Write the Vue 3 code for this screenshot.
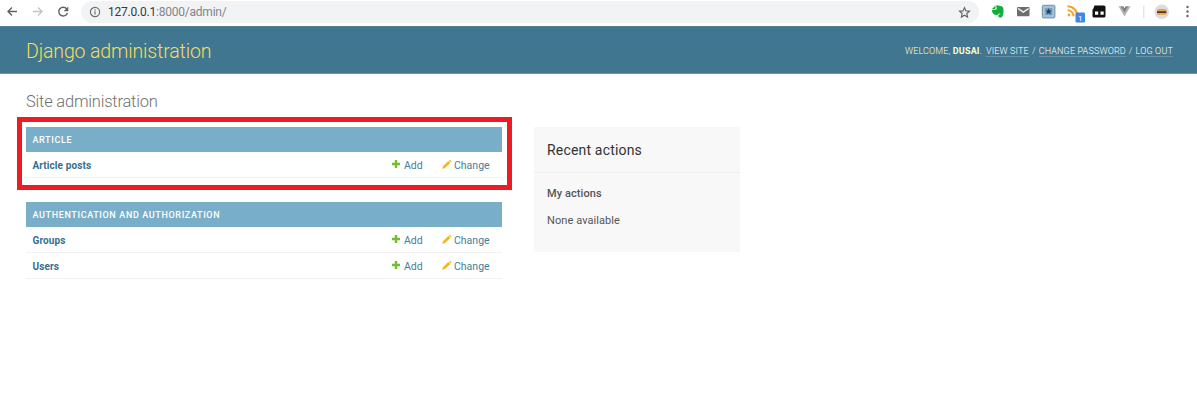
<script setup>
const modules = [
  { name: 'Article', models: ['Article posts'], marked: true },
  { name: 'Authentication and Authorization', models: ['Groups', 'Users'], marked: false },
]
</script>

<template>
  <div class="page">
    <div class="toolbar">
      <svg class="nav" width="76" height="24" viewBox="0 0 76 24" fill="none" stroke-width="1.4">
        <path d="M17 11.5H8M12 7.5l-4 4 4 4" stroke="#5f6368" />
        <path d="M33 11.5h9M38 7.5l4 4-4 4" stroke="#c2c4c6" />
        <path d="M66.600 8.800A4.400 4.400 0 1 0 67.400 13" stroke="#5f6368" />
        <path d="M68.300 6.600v4.600h-4.600z" fill="#5f6368" />
      </svg>
      <div class="omnibox">
        <svg class="info" width="12" height="12" viewBox="0 0 12 12" fill="none" stroke="#6b6f73" stroke-width="1.200">
          <circle cx="6" cy="6" r="4.600" />
          <path d="M6 5.300v3.200M6 3.200v1.200" />
        </svg>
        <span class="url"><span class="host">127.0.0.1</span>:8000/admin/</span>
        <svg class="star" width="13" height="13" viewBox="0 0 24 24" fill="none" stroke="#5f6368" stroke-width="2.100">
          <path d="M12 3l2.700 6 6.500.6-4.900 4.300 1.400 6.400-5.700-3.400-5.700 3.400 1.400-6.400-4.900-4.300 6.500-.6z" />
        </svg>
      </div>
      <svg class="extensions" width="219" height="24" viewBox="978 0 219 24">
        <path d="M992 9l3.500-3.500v2.700q0 .8-.8.8zM996.200 5.600q2-.8 3.600.3l2 .4q1.700.5 1.700 3.700 0 5-1.500 6.900-.8 1-2.500.6-1.500-.5-1.200-2 .4-1.400 2-1.100v-.7q-1.800-.4-2.200.6-.7 1.300-3 .5-3-.8-3.200-5h3.500q1.200 0 1.200-1.200z" fill="#13ae39" />
        <rect x="1017" y="7" width="12.500" height="9.300" rx="1" fill="#6d6d6d" />
        <path d="M1018 8.500l5.300 3.600 5.300-3.600" fill="none" stroke="#f6f6f6" stroke-width="1.400" />
        <rect x="1042.300" y="5.300" width="12.600" height="12.600" rx="1.200" fill="#a3c1d8" stroke="#6f8fa6" />
        <path d="M1045.200 8h7v7h-7z" fill="#6f9dbd" />
        <path d="M1048.700 8.300l.9 2.200 2.300.1-1.800 1.400.7 2.300-2.100-1.300-2.100 1.300.7-2.300-1.800-1.400 2.300-.1z" fill="#193f5e" />
        <g fill="none" stroke="#f5a42c" stroke-width="2.100">
          <path d="M1067.500 6.300a10 10 0 0 1 10 10M1067.500 10.200a6 6 0 0 1 6 6" />
          <circle cx="1069" cy="15" r=".7" fill="#f5a42c" stroke-width="1.400" />
        </g>
        <rect x="1075.500" y="12.500" width="9.500" height="10" rx="1" fill="#4285e8" />
        <text x="1080.200" y="20.500" text-anchor="middle" fill="#fff" font-size="8">1</text>
        <path d="M1094.500 5.500h9.500q1.500 0 1.500 1.500v9q0 1.500-1.500 1.500h-10q-1.500 0-1.500-1.500v-6q0-1 .8-1.300z" fill="#111" />
        <path d="M1095 11.500h3.200v3.300h-3.200zM1100.500 11.500h3.200v3.300h-3.200z" fill="#fff" />
        <path d="M1118.500 6.200h3.600l2.400 4 2.400-4h3.600l-6 10.400z" fill="#b2b2b2" />
        <path d="M1121 6.200h2.300l1.200 2 1.200-2h2.300l-3.500 6z" fill="#7d7d7d" />
        <path d="M1143.800 5.500v13" stroke="#dadada" />
        <circle cx="1161.800" cy="11.800" r="7.200" fill="#dedbdc" />
        <rect x="1157" y="9" width="9.500" height="3" rx="1.500" fill="#dda647" />
        <rect x="1157" y="11.300" width="9.500" height="1.900" fill="#50331c" />
        <path d="M1157 13.200h9.500v.8q0 1-1 1h-7.500q-1 0-1-1z" fill="#dfae68" />
        <g fill="#5f6368"><circle cx="1187.500" cy="7" r="1.200" /><circle cx="1187.500" cy="11.500" r="1.200" /><circle cx="1187.500" cy="16" r="1.200" /></g>
      </svg>
    </div>

    <header class="header">
      <div class="branding">Django administration</div>
      <div class="tools">
        <span class="welcome">Welcome, <strong>dusai</strong>.</span>
        <a>View site</a><i>/</i><a>Change password</a><i>/</i><a>Log out</a>
      </div>
    </header>

    <main class="content">
      <h1>Site administration</h1>
      <div class="columns">
        <div class="apps">
          <section v-for="m in modules" :key="m.name" class="module" :class="{ marked: m.marked }">
            <h2>{{ m.name }}</h2>
            <div v-for="model in m.models" :key="model" class="row">
              <b>{{ model }}</b>
              <svg class="icon" width="8" height="8" viewBox="0 0 8 8"><path d="M2.800 0h2.400v2.800h2.800v2.400h-2.800v2.800h-2.400v-2.800h-2.800v-2.400h2.800z" fill="#70bf2b" /></svg>
              <a>Add</a>
              <svg class="icon" width="10" height="9" viewBox="0 0 10 9"><path d="M.2 9l.8-2.800L6.300 1l2 1.900-5.300 5.200zM6.900.5q1-.9 2 0t0 1.900z" fill="#f3b61f" /></svg>
              <a>Change</a>
            </div>
          </section>
        </div>
        <aside class="recent">
          <h2>Recent actions</h2>
          <h3>My actions</h3>
          <p>None available</p>
        </aside>
      </div>
    </main>
  </div>
</template>

<style>
body { margin: 0; background: #fff; }
</style>

<style scoped>
* { box-sizing: border-box; }
.page { width: 1197px; height: 400px; overflow: hidden; background: #fff; font-family: Roboto, sans-serif; white-space: nowrap; }
h1, h2, h3, p { margin: 0; }
.toolbar { display: flex; height: 26px; }
.nav { flex: none; }
.omnibox { display: flex; align-items: center; width: 898px; height: 22px; margin-left: 5px; margin-top: 1px; padding: 0 8px; background: #f1f3f4; border-radius: 11px; flex: none; }
.url { margin-left: 7px; font-size: 12px; line-height: 22px; letter-spacing: -.22px; color: #80858a; }
.host { color: #36393d; }
.star { margin-left: auto; }
.extensions { flex: none; margin-left: -1px; }
.header { display: flex; align-items: center; justify-content: space-between; height: 48px; padding: 0 24px 0 26px; background: #417690; border-top: 1px solid #537f96; border-bottom: 1px solid #6b94a8; }
.branding { font-size: 19.500px; font-weight: 300; line-height: 24px; letter-spacing: -.13px; color: #f5dd5d; padding-top: 4px; }
.tools { display: flex; font-size: 9px; line-height: 10px; letter-spacing: .16px; color: #ffc; text-transform: uppercase; font-weight: 300; margin-top: 2px; }
.welcome { margin-right: 4px; }
.welcome strong { font-weight: 700; }
.tools a { color: #fff; border-bottom: 1px solid #6791a6; }
.tools i { font-style: normal; margin: 0 3px; }
.content { padding: 18px 26px 0; }
h1 { height: 35px; font-size: 16.500px; line-height: 20px; font-weight: 300; letter-spacing: -.21px; color: #707070; }
.columns { display: flex; align-items: flex-start; }
.apps { width: 476px; margin-right: 32px; }
.module { margin-bottom: 24px; }
.marked { position: relative; height: 51px; }
.marked::after { content: ''; box-sizing: border-box; position: absolute; left: -9px; top: -10px; width: 495px; height: 73px; border: 5px solid #ed1c24; }
.module h2 { height: 25px; padding-left: 6.500px; background: #79aec8; color: #fff; font-size: 9px; line-height: 26px; font-weight: 500; letter-spacing: .64px; text-transform: uppercase; }
.row { display: grid; grid-template-columns: 359.500px 12px 38px 12px 1fr; align-items: center; height: 26px; padding: 2px 0 0 6.500px; border-bottom: 1px solid #f3f3f3; font-size: 10.500px; line-height: 14px; color: #447e9b; }
.icon { margin-top: -3px; }
.row b { font-weight: 700; font-size: 10px; letter-spacing: .1px; color: #36708f; }
.recent { width: 206px; height: 125px; background: #f8f8f8; color: #333; }
.recent h2 { height: 46px; padding-left: 13px; border-bottom: 1px solid #eee; font-size: 14px; line-height: 46px; font-weight: 400; letter-spacing: .18px; }
.recent h3 { padding: 14px 0 0 13px; font-size: 11px; line-height: 14px; font-weight: 500; letter-spacing: .08px; color: #555; }
.recent p { padding: 13px 0 0 13px; font-size: 11px; line-height: 14px; letter-spacing: .08px; color: #555; }
</style>
